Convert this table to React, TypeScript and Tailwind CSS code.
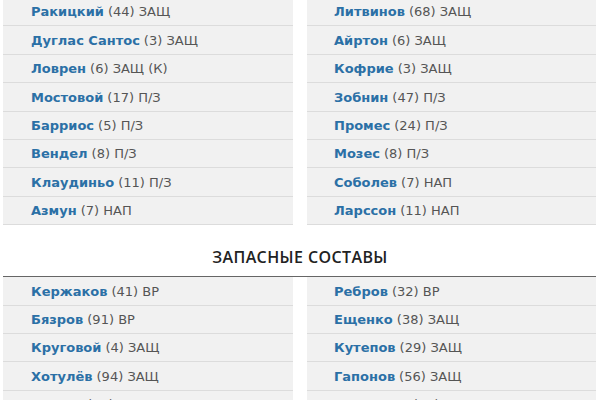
type Player = { name: string; num: number; pos: string };

const mainLeft: Player[] = [
  { name: "Ракицкий", num: 44, pos: "ЗАЩ" },
  { name: "Дуглас Сантос", num: 3, pos: "ЗАЩ" },
  { name: "Ловрен", num: 6, pos: "ЗАЩ (К)" },
  { name: "Мостовой", num: 17, pos: "П/З" },
  { name: "Барриос", num: 5, pos: "П/З" },
  { name: "Вендел", num: 8, pos: "П/З" },
  { name: "Клаудиньо", num: 11, pos: "П/З" },
  { name: "Азмун", num: 7, pos: "НАП" },
];

const mainRight: Player[] = [
  { name: "Литвинов", num: 68, pos: "ЗАЩ" },
  { name: "Айртон", num: 6, pos: "ЗАЩ" },
  { name: "Кофрие", num: 3, pos: "ЗАЩ" },
  { name: "Зобнин", num: 47, pos: "П/З" },
  { name: "Промес", num: 24, pos: "П/З" },
  { name: "Мозес", num: 8, pos: "П/З" },
  { name: "Соболев", num: 7, pos: "НАП" },
  { name: "Ларссон", num: 11, pos: "НАП" },
];

const subsLeft: Player[] = [
  { name: "Кержаков", num: 41, pos: "ВР" },
  { name: "Бязров", num: 91, pos: "ВР" },
  { name: "Круговой", num: 4, pos: "ЗАЩ" },
  { name: "Хотулёв", num: 94, pos: "ЗАЩ" },
  { name: "Кузяев", num: 21, pos: "П/З" },
];

const subsRight: Player[] = [
  { name: "Ребров", num: 32, pos: "ВР" },
  { name: "Ещенко", num: 38, pos: "ЗАЩ" },
  { name: "Кутепов", num: 29, pos: "ЗАЩ" },
  { name: "Гапонов", num: 56, pos: "ЗАЩ" },
  { name: "Глушаков", num: 19, pos: "П/З" },
];

function Row({ p, pad }: { p: Player; pad: string }) {
  return (
    <li
      className={`flex h-[28.4px] items-center border-b border-[#dcdcdc] bg-[#f1f1f1] ${pad} pt-[1px] text-[13px] text-[#555]`}
    >
      <span className="font-bold text-[#2b70a6]">{p.name}</span>
      <span className="ml-[4px]">
        ({p.num}) {p.pos}
      </span>
    </li>
  );
}

function Lineup({ left, right }: { left: Player[]; right: Player[] }) {
  return (
    <div className="flex gap-[14px] pl-[3px] pr-[4px]">
      <ul className="w-[290px]">
        {left.map((p) => (
          <Row key={p.name} p={p} pad="pl-[28px]" />
        ))}
      </ul>
      <ul className="w-[289px]">
        {right.map((p) => (
          <Row key={p.name} p={p} pad="pl-[27px]" />
        ))}
      </ul>
    </div>
  );
}

export default function App() {
  return (
    <div
      className="h-[400px] w-[600px] overflow-hidden bg-white"
      style={{ fontFamily: '"DejaVu Sans", "Open Sans", sans-serif' }}
    >
      <div className="-mt-[2px]">
        <Lineup left={mainLeft} right={mainRight} />
        <h2 className="pt-[20px] pb-[7px] text-center font-['Open_Sans',sans-serif] text-[16px] font-semibold tracking-[0.4px] text-[#222]">
          ЗАПАСНЫЕ СОСТАВЫ
        </h2>
        <div className="ml-[3px] mr-[4px] border-t border-[#666]">
          <div className="-ml-[3px] -mr-[4px]">
            <Lineup left={subsLeft} right={subsRight} />
          </div>
        </div>
      </div>
    </div>
  );
}
